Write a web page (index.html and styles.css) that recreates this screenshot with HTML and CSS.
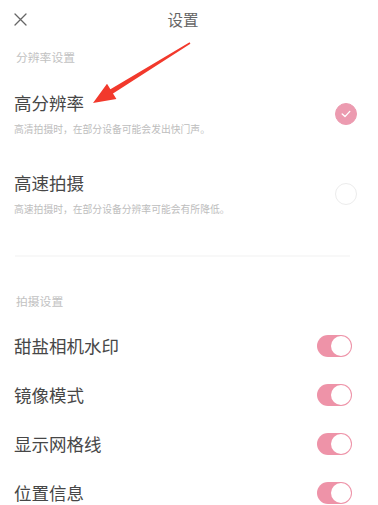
FILE: index.html
```html
<!DOCTYPE html>
<html lang="zh-CN">
<head>
<meta charset="utf-8">
<title>设置</title>
<link rel="stylesheet" href="styles.css">
</head>
<body>
<div class="page">
  <header class="header">
    <span class="close">
      <svg width="13" height="13" viewBox="0 0 13 13"><path d="M1 1 L12 12 M12 1 L1 12" stroke="#666" stroke-width="1.3" fill="none" stroke-linecap="round"/></svg>
    </span>
    <h1 class="title">设置</h1>
    <span class="spacer"></span>
  </header>

  <div class="section-label first">分辨率设置</div>

  <div class="option">
    <div class="option-text">
      <div class="option-title">高分辨率</div>
      <div class="option-desc">高清拍摄时，在部分设备可能会发出快门声。</div>
    </div>
    <span class="radio checked">
      <svg width="10" height="8" viewBox="0 0 10 8"><path d="M1.2 4 L4 6.6 L8.8 1.4" stroke="#fff" stroke-width="1.4" fill="none" stroke-linecap="round" stroke-linejoin="round"/></svg>
    </span>
  </div>

  <div class="option">
    <div class="option-text">
      <div class="option-title">高速拍摄</div>
      <div class="option-desc">高速拍摄时，在部分设备分辨率可能会有所降低。</div>
    </div>
    <span class="radio"></span>
  </div>

  <div class="divider"></div>

  <div class="section-label second">拍摄设置</div>

  <div class="toggle-row">
    <span class="toggle-label">甜盐相机水印</span>
    <span class="switch"><span class="knob"></span></span>
  </div>
  <div class="toggle-row">
    <span class="toggle-label">镜像模式</span>
    <span class="switch"><span class="knob"></span></span>
  </div>
  <div class="toggle-row">
    <span class="toggle-label">显示网格线</span>
    <span class="switch"><span class="knob"></span></span>
  </div>
  <div class="toggle-row">
    <span class="toggle-label">位置信息</span>
    <span class="switch"><span class="knob"></span></span>
  </div>

  <svg class="arrow" width="378" height="505" viewBox="0 0 378 505">
    <polygon points="93,103 116.4,99.1 113,93.5 190.4,43.7 189.6,42.3 110.4,89.3 107,83.7" fill="#f2392c"/>
  </svg>
</div>
</body>
</html>
```

FILE: styles.css
```css
html, body {
  margin: 0;
  padding: 0;
  background: #ffffff;
}

body {
  font-family: "Noto Sans CJK SC", "Noto Sans", sans-serif;
  overflow: hidden;
}

.page {
  position: relative;
  width: 378px;
  height: 505px;
  overflow: hidden;
}

.header {
  display: grid;
  grid-template-columns: 40px 1fr 52px;
  align-items: center;
  height: 38px;
}

.close {
  display: flex;
  align-items: center;
  padding-left: 14px;
  padding-top: 1px;
}

.title {
  margin: 0;
  text-align: center;
  font-size: 15.5px;
  font-weight: 400;
  color: #666666;
  line-height: 38px;
}

.section-label {
  font-size: 11.8px;
  line-height: 16px;
  color: #c2c2c2;
  padding-left: 16px;
}

.section-label.first {
  padding-top: 11px;
  padding-bottom: 9px;
}

.section-label.second {
  padding-top: 36px;
  padding-bottom: 12px;
}

.option {
  display: flex;
  align-items: center;
  justify-content: space-between;
  padding: 17px 21px 17px 14px;
}

.option-title {
  font-size: 17.5px;
  line-height: 24px;
  color: #474747;
}

.option-desc {
  margin-top: 6px;
  font-size: 9.8px;
  line-height: 16px;
  color: #bdbdbd;
}

.radio {
  width: 22px;
  height: 22px;
  box-sizing: border-box;
  border-radius: 50%;
  border: 1px solid #ececec;
  display: flex;
  align-items: center;
  justify-content: center;
}

.radio.checked {
  background: #ec9bb0;
  border-color: #ec9bb0;
}

.divider {
  margin: 21px 28px 0 15px;
  height: 2px;
  background: #f8f8f8;
}

.toggle-row {
  display: flex;
  align-items: center;
  justify-content: space-between;
  height: 49px;
  padding: 0 26px 0 14px;
}

.toggle-label {
  font-size: 17.5px;
  color: #474747;
}

.switch {
  width: 35px;
  height: 22px;
  box-sizing: border-box;
  border-radius: 11px;
  background: #ee93a8;
  display: flex;
  align-items: center;
  justify-content: flex-end;
  padding: 1px;
}

.knob {
  width: 20px;
  height: 20px;
  box-sizing: border-box;
  border-radius: 50%;
  background: #ffffff;
}

.arrow {
  position: absolute;
  left: 0;
  top: 0;
  pointer-events: none;
}
```
